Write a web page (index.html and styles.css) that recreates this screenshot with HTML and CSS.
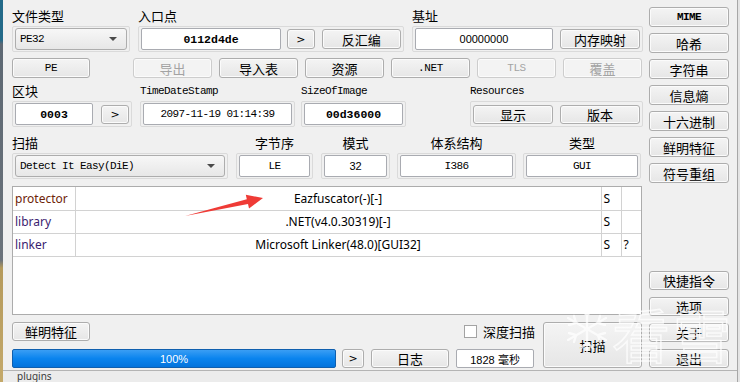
FILE: index.html
```html
<!DOCTYPE html>
<html lang="zh-CN">
<head>
    <meta charset="UTF-8">
    <meta name="viewport" content="width=device-width, initial-scale=1.0">
    <title>Detect It Easy</title>
    <link rel="stylesheet" href="styles.css">
</head>
<body>
<div class="screen">
    <div class="edge-left"></div>
    <div class="main">
        <div class="dialog">
            <div class="panel">
                <!-- file type / entry point / image base -->
                <div class="row row-top">
                    <div class="fld">
                        <div class="lbl">文件类型</div>
                        <div class="grp g-type">
                            <div class="combo"><span class="mono">PE32</span><i class="caret"></i></div>
                        </div>
                    </div>
                    <div class="fld">
                        <div class="lbl">入口点</div>
                        <div class="grp g-entry">
                            <div class="edit bold w-entry">0112d4de</div>
                            <button class="btn w-arrow">&gt;</button>
                            <button class="btn w-80">反汇编</button>
                        </div>
                    </div>
                    <div class="fld">
                        <div class="lbl">基址</div>
                        <div class="grp g-base">
                            <div class="edit num w-base">00000000</div>
                            <button class="btn w-80">内存映射</button>
                        </div>
                    </div>
                </div>

                <div class="row row-tabs">
                    <button class="btn mono w-pe">PE</button>
                    <button class="btn off w-tab">导出</button>
                    <button class="btn w-tab">导入表</button>
                    <button class="btn w-tab">资源</button>
                    <button class="btn mono w-tab">.NET</button>
                    <button class="btn mono off w-tab">TLS</button>
                    <button class="btn off w-tab">覆盖</button>
                </div>

                <!-- sections / timestamp / size / resources -->
                <div class="row row-mid">
                    <div class="fld f-sec">
                        <div class="lbl">区块</div>
                        <div class="grp">
                            <div class="edit bold w-sec">0003</div>
                            <button class="btn w-arrow small">&gt;</button>
                        </div>
                    </div>
                    <div class="fld f-time">
                        <div class="lbl mono-lbl">TimeDateStamp</div>
                        <div class="grp">
                            <div class="edit mono w-time">2097-11-19 01:14:39</div>
                        </div>
                    </div>
                    <div class="fld f-size">
                        <div class="lbl mono-lbl">SizeOfImage</div>
                        <div class="grp">
                            <div class="edit bold w-size">00d36000</div>
                        </div>
                    </div>
                    <div class="fld f-res">
                        <div class="lbl mono-lbl">Resources</div>
                        <div class="grp">
                            <button class="btn w-80 small">显示</button>
                            <button class="btn w-80 small">版本</button>
                        </div>
                    </div>
                </div>

                <!-- scan engine / endianness / mode / arch / type -->
                <div class="row row-scan">
                    <div class="fld f-engine">
                        <div class="lbl">扫描</div>
                        <div class="grp">
                            <div class="combo"><span class="mono">Detect It Easy(DiE)</span><i class="caret"></i></div>
                        </div>
                    </div>
                    <div class="fld f-endian">
                        <div class="lbl center">字节序</div>
                        <div class="grp"><div class="edit mono">LE</div></div>
                    </div>
                    <div class="fld f-mode">
                        <div class="lbl center">模式</div>
                        <div class="grp"><div class="edit num">32</div></div>
                    </div>
                    <div class="fld f-arch">
                        <div class="lbl center">体系结构</div>
                        <div class="grp"><div class="edit mono">I386</div></div>
                    </div>
                    <div class="fld f-kind">
                        <div class="lbl center">类型</div>
                        <div class="grp"><div class="edit mono">GUI</div></div>
                    </div>
                </div>

                <div class="results">
                    <table>
                        <tr>
                            <td class="c-type t-prot">protector</td>
                            <td class="c-name">Eazfuscator(-)[-]</td>
                            <td class="c-flag">S</td>
                            <td class="c-flag"></td>
                        </tr>
                        <tr>
                            <td class="c-type t-lib">library</td>
                            <td class="c-name">.NET(v4.0.30319)[-]</td>
                            <td class="c-flag">S</td>
                            <td class="c-flag"></td>
                        </tr>
                        <tr>
                            <td class="c-type t-lib">linker</td>
                            <td class="c-name">Microsoft Linker(48.0)[GUI32]</td>
                            <td class="c-flag">S</td>
                            <td class="c-flag">?</td>
                        </tr>
                    </table>
                    <svg class="arrow" width="260" height="40" viewBox="0 0 260 40">
                        <polygon points="173,30 234.8,13.2 233.8,8.8 251,12 237,22.4 236,18" fill="#ef3b36"/>
                    </svg>
                </div>

                <div class="row-foot">
                    <div class="foot-left">
                        <div class="foot-line">
                            <button class="btn w-78 small">鲜明特征</button>
                            <label class="chk"><span class="box"></span>深度扫描</label>
                        </div>
                        <div class="foot-line">
                            <div class="progress">100%</div>
                            <button class="btn w-22 small">&gt;</button>
                            <button class="btn w-78 small">日志</button>
                            <div class="edit num w-78 small">1828 毫秒</div>
                        </div>
                    </div>
                    <button class="btn scan">扫描</button>
                </div>
            </div>

            <div class="side">
                <div class="stack">
                    <button class="btn mime">MIME</button>
                    <button class="btn">哈希</button>
                    <button class="btn">字符串</button>
                    <button class="btn">信息熵</button>
                    <button class="btn">十六进制</button>
                    <button class="btn">鲜明特征</button>
                    <button class="btn">符号重组</button>
                </div>
                <div class="stack stack-end">
                    <button class="btn small">快捷指令</button>
                    <button class="btn small">选项</button>
                    <button class="btn small">关于</button>
                    <button class="btn small">退出</button>
                </div>
            </div>

            <!-- forum watermark over the corner -->
            <div class="watermark">
                <svg class="flake" width="46" height="50" viewBox="0 0 46 50">
                    <g stroke="#ffffff" stroke-width="2.4" fill="none" stroke-linecap="round">
                        <line x1="23" y1="3" x2="23" y2="47"/>
                        <line x1="4" y1="14" x2="42" y2="36"/>
                        <line x1="4" y1="36" x2="42" y2="14"/>
                        <polyline points="17,6 23,11 29,6"/>
                        <polyline points="17,44 23,39 29,44"/>
                        <polyline points="5,21 12,19 10,12"/>
                        <polyline points="41,29 34,31 36,38"/>
                        <polyline points="5,29 12,31 10,38"/>
                        <polyline points="41,21 34,19 36,12"/>
                    </g>
                </svg>
                <span class="wm-text">看雪</span>
            </div>
        </div>
        <div class="under"><span>plugins</span></div>
    </div>
    <div class="edge-right"></div>
</div>
</body>
</html>
```

FILE: styles.css
```css
:root {
    --face: #f0f0f0;
    --btn-border: #adadad;
    --edit-border: #a9abb1;
    --frame: #dadada;
    --text: #000000;
    --text-off: #a3a3a3;
}

* {
    box-sizing: border-box;
}

body {
    margin: 0;
    background-color: var(--face);
    color: var(--text);
    font-family: "Noto Sans CJK SC", "Noto Sans", sans-serif;
    font-size: 13px;
}

.screen {
    width: 740px;
    height: 382px;
    display: flex;
    overflow: hidden;
}

.edge-left {
    width: 3px;
    background: linear-gradient(#236a89 0, #236a89 40px, #5d6873 44px, #6b737b 260px, #b59a5c 268px, #c4a96a 100%);
}

.edge-right {
    width: 3px;
    border-left: 1px solid #a7a7a7;
    background-color: #e4e4e4;
}

.main {
    flex: 1;
    display: flex;
    flex-direction: column;
}

.dialog {
    position: relative;
    height: 370px;
    display: flex;
    gap: 7px;
    padding: 6px 8px 2px 9px;
}

.under {
    flex: 1;
    border-top: 1px solid #b4b4b4;
    background-color: #ececec;
    overflow: hidden;
    padding-left: 14px;
    font-family: "Noto Sans", sans-serif;
    font-size: 10px;
    line-height: 11px;
    color: #3a3a3a;
}

/* ---- left panel ---- */

.panel {
    width: 630px;
    display: flex;
    flex-direction: column;
}

.row {
    display: flex;
}

.fld {
    display: flex;
    flex-direction: column;
}

.lbl {
    height: 20px;
    line-height: 20px;
    font-size: 13px;
    white-space: nowrap;
}

.lbl.center {
    text-align: center;
}

.mono-lbl {
    font-family: "Liberation Mono", monospace;
    font-size: 11px;
    letter-spacing: -0.6px;
    line-height: 21px;
}

.grp {
    height: 26px;
    display: flex;
    align-items: center;
    gap: 7px;
    padding: 1px 2px;
    border: 1px solid var(--frame);
    border-radius: 2px;
}

.row-top {
    gap: 8px;
}

.g-type {
    width: 118px;
}

.g-entry {
    width: 266px;
}

.g-entry .w-entry {
    margin-right: -1px;
}

.g-base {
    width: 231px;
}

.row-tabs {
    margin-top: 6px;
    gap: 7px;
}

.row-mid {
    margin-top: 3px;
}

.f-sec .grp { width: 120px; gap: 8px; }
.f-time { margin-left: 8px; }
.f-time .grp { width: 155px; }
.f-size { margin-left: 6px; }
.f-size .grp { width: 105px; }
.f-res { margin-left: 64px; }
.f-res .grp { width: 173px; }

.row-scan {
    margin-top: 6px;
}

.f-engine .grp { width: 216px; }
.f-endian { margin-left: 8px; }
.f-endian .grp { width: 77px; }
.f-mode { margin-left: 8px; }
.f-mode .grp { width: 69px; }
.f-arch { margin-left: 7px; }
.f-arch .grp { width: 119px; }
.f-kind { margin-left: 7px; }
.f-kind .grp { width: 118px; }

/* ---- controls ---- */

.btn {
    height: 20px;
    margin: 0;
    padding: 0;
    display: flex;
    align-items: center;
    justify-content: center;
    border: 1px solid var(--btn-border);
    border-radius: 3px;
    background: linear-gradient(#f4f4f4, #e6e6e6);
    box-shadow: inset 0 0 0 1px #fbfbfb;
    font-family: "Noto Sans CJK SC", "Noto Sans", sans-serif;
    font-size: 13px;
    line-height: 1;
    color: var(--text);
    white-space: nowrap;
}

.btn.small {
    height: 19px;
}

.btn.mono {
    font-family: "Liberation Mono", monospace;
    font-size: 11px;
    letter-spacing: -0.4px;
}

.btn.off {
    color: var(--text-off);
    border-color: #cdcdcd;
    background: #f3f3f3;
}

.w-arrow { width: 28px; font-family: "DejaVu Sans", sans-serif; font-size: 11px; }
.w-80 { width: 80px; }
.w-78 { width: 78px; }
.w-22 { width: 22px; font-family: "DejaVu Sans", sans-serif; font-size: 11px; }
.w-pe { width: 78px; margin-right: 36px; }
.w-tab { width: 79px; }

.edit {
    flex: 1;
    height: 22px;
    display: flex;
    align-items: center;
    justify-content: center;
    background-color: #ffffff;
    border: 1px solid var(--edit-border);
    border-radius: 2px;
    white-space: nowrap;
}

.edit.small {
    height: 19px;
}

.w-entry { flex: none; width: 140px; }
.w-base { flex: none; width: 138px; }
.w-sec { flex: none; width: 78px; }
.w-78 { flex: none; }

.mono {
    font-family: "Liberation Mono", monospace;
    font-size: 11px;
    letter-spacing: -0.6px;
}

.bold {
    font-family: "Liberation Mono", monospace;
    font-weight: bold;
    font-size: 11.5px;
}

.num {
    font-family: "Liberation Sans", sans-serif;
    font-size: 11px;
}

.combo {
    flex: 1;
    height: 22px;
    display: flex;
    align-items: center;
    justify-content: space-between;
    padding: 0 9px 0 4px;
    border: 1px solid var(--btn-border);
    border-radius: 3px;
    background: linear-gradient(#f7f7f7, #e7e7e7);
}

.caret {
    width: 0;
    height: 0;
    border-left: 4px solid transparent;
    border-right: 4px solid transparent;
    border-top: 4px solid #4a4a4a;
}

/* ---- results list ---- */

.results {
    position: relative;
    margin-top: 7px;
    height: 129px;
    background-color: #ffffff;
    border: 1px solid #acacac;
}

.results table {
    width: 100%;
    border-collapse: collapse;
    font-family: "Noto Sans", sans-serif;
    font-size: 12px;
}

.results td {
    height: 23px;
    padding: 0 2px;
    border-right: 1px solid #d2d2d2;
    border-bottom: 1px solid #d2d2d2;
    white-space: nowrap;
}

.results td:last-child {
    border-right: none;
}

.c-type { width: 62px; }
.c-name { text-align: center; }
.c-flag { width: 20px; padding-left: 4px; }

.t-prot { color: #6e2408; }
.t-lib { color: #3b1d70; }

.arrow {
    position: absolute;
    left: -1px;
    top: -1px;
}

/* ---- bottom controls ---- */

.row-foot {
    margin-top: 7px;
    height: 46px;
    display: grid;
    grid-template-columns: 523px 99px;
    column-gap: 8px;
}

.foot-left {
    display: flex;
    flex-direction: column;
    gap: 8px;
}

.foot-line {
    display: flex;
    align-items: center;
    gap: 7px;
    height: 19px;
}

.chk {
    display: flex;
    align-items: center;
    gap: 6px;
    margin-left: 367px;
    font-size: 13px;
    white-space: nowrap;
}

.chk .box {
    width: 13px;
    height: 13px;
    border: 1px solid #a3a3a3;
    background-color: #ffffff;
}

.progress {
    width: 324px;
    height: 19px;
    display: flex;
    align-items: center;
    justify-content: center;
    border: 1px solid #0f5fae;
    border-radius: 2px;
    background: linear-gradient(#3a9ef4, #0a84ee 50%, #0373dc);
    color: #ffffff;
    font-family: "Liberation Sans", sans-serif;
    font-size: 11px;
    margin-right: -1px;
}

.scan {
    height: 46px;
}

/* ---- right column ---- */

.side {
    width: 80px;
    display: flex;
    flex-direction: column;
    justify-content: space-between;
    padding-top: 1px;
}

.stack {
    display: flex;
    flex-direction: column;
    gap: 6px;
}

.stack-end {
    gap: 7px;
}

.mime {
    font-family: "Liberation Mono", monospace;
    font-weight: bold;
    font-size: 11px;
    letter-spacing: -0.6px;
}

/* ---- watermark ---- */

.watermark {
    position: absolute;
    left: 561px;
    top: 302px;
    display: flex;
    align-items: flex-start;
    gap: 2px;
    white-space: nowrap;
    opacity: 0.75;
    pointer-events: none;
}

.flake {
    margin-top: 2px;
}

.wm-text {
    font-family: "Noto Sans CJK SC", sans-serif;
    font-size: 58px;
    line-height: 62px;
    color: transparent;
    -webkit-text-stroke: 1.5px #ffffff;
    letter-spacing: 3px;
}
```
